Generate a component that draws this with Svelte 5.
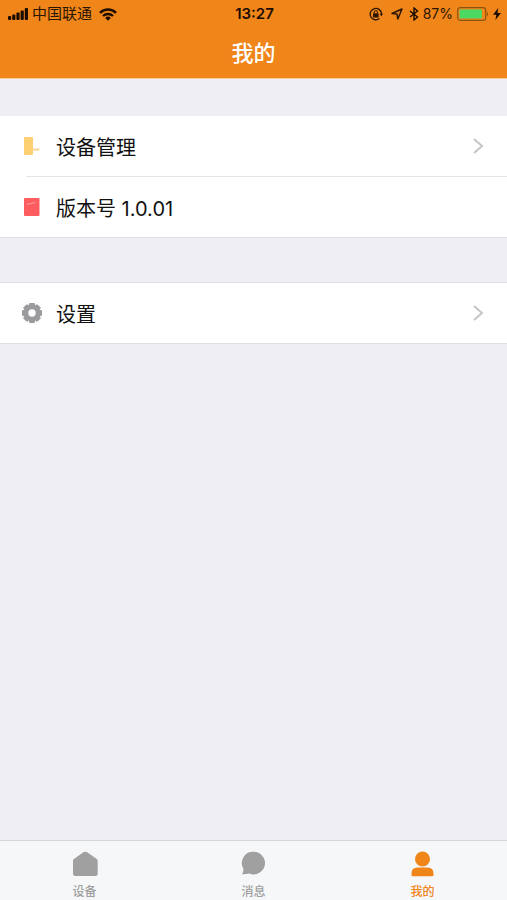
<script lang="ts">
  type Icon = 'door' | 'book' | 'gear'

  interface Row {
    icon: Icon
    label: string
    link: boolean
  }

  const groups: Row[][] = [
    [
      { icon: 'door', label: '设备管理', link: true },
      { icon: 'book', label: '版本号 1.0.01', link: false },
    ],
    [{ icon: 'gear', label: '设置', link: true }],
  ]

  const tabs = [
    { id: 'device', label: '设备' },
    { id: 'message', label: '消息' },
    { id: 'mine', label: '我的' },
  ]

  const teeth = [0, 45, 90, 135, 180, 225, 270, 315]

  let active = $state('mine')
</script>

{#snippet rowIcon(icon: Icon)}
  <svg width="20" height="20" viewBox="0 0 20 20" aria-hidden="true">
    {#if icon === 'door'}
      <rect x="2" y="1" width="9" height="18" rx="1" fill="#fed071" />
      <path d="M9 13.5h8.5" stroke="#fbd58c" stroke-width="2" />
    {:else if icon === 'book'}
      <rect x="2" y="1" width="15.5" height="18" rx="1" fill="#fd5d5f" />
      <path d="M5 7.2q5-.4 8-2" fill="none" stroke="#ff9a98" stroke-width="1.2" />
    {:else}
      <g fill="#9b9b9d">
        {#each teeth as angle}
          <rect x="7" y="0" width="6" height="5" rx="1.2" transform="rotate({angle} 10 10)" />
        {/each}
      </g>
      <circle cx="10" cy="10" r="6" fill="none" stroke="#9b9b9d" stroke-width="4.6" />
    {/if}
  </svg>
{/snippet}

{#snippet rowContent(row: Row)}
  {@render rowIcon(row.icon)}
  <span class="row-label">{row.label}</span>
  {#if row.link}
    <svg width="12" height="18" viewBox="0 0 12 18" aria-hidden="true">
      <path d="M2 2l8 7-8 7" fill="none" stroke="#c5c5c9" stroke-width="2" />
    </svg>
  {/if}
{/snippet}

<div class="app">
  <header>
    <div class="status-bar">
      <div class="status-left">
        <svg width="21" height="12" viewBox="0 0 21 12" fill="#1c0d00" aria-hidden="true">
          <rect x="0" y="8" width="3.2" height="4" rx="1" />
          <rect x="4.2" y="6.5" width="3.2" height="5.5" rx="1" />
          <rect x="8.4" y="4.5" width="3.2" height="7.5" rx="1" />
          <rect x="12.6" y="2.5" width="3.2" height="9.5" rx="1" />
          <rect x="16.8" y="0" width="3.2" height="12" rx="1" />
        </svg>
        <span class="carrier">中国联通</span>
        <svg width="18" height="13" viewBox="0 0 18 13" aria-hidden="true">
          <g fill="none" stroke="#1c0d00" stroke-width="2.4">
            <path d="M1 4.8a11.5 11.5 0 0 1 16 0" />
            <path d="M4 8a7.2 7.2 0 0 1 10 0" />
          </g>
          <path d="M9 12.8l-2.8-2.9a4 4 0 0 1 5.6 0z" fill="#1c0d00" />
        </svg>
      </div>
      <span class="time">13:27</span>
      <div class="status-right">
        <svg width="14" height="14" viewBox="0 0 14 14" aria-hidden="true">
          <path d="M10.5 11.6A5.7 5.7 0 1 1 12.6 7" fill="none" stroke="#2b1602" stroke-width="1.3" />
          <path d="M10.6 6.8h3.4l-1.6 2.5z" fill="#2b1602" />
          <rect x="4" y="6.2" width="5.6" height="4.2" rx=".5" fill="#2b1602" />
          <path d="M5.2 6.5V5.2a1.6 1.6 0 0 1 3.2 0v1.3" fill="none" stroke="#2b1602" />
        </svg>
        <svg class="location" width="12" height="12" viewBox="0 0 12 12" aria-hidden="true">
          <path d="M1 5.5L11 1 6.8 11 6 6z" fill="none" stroke="#2b1602" stroke-width="1.5" stroke-linejoin="round" />
        </svg>
        <svg width="10" height="14" viewBox="0 0 10 14" aria-hidden="true">
          <path d="M1 4l7.5 6L5 13V1l3.5 3L1 10" fill="none" stroke="#1c0d00" stroke-width="1.4" />
        </svg>
        <span class="percent">87%</span>
        <svg width="32" height="14" viewBox="0 0 32 14" aria-hidden="true">
          <rect x=".7" y=".7" width="28" height="12.6" rx="2.5" fill="none" stroke="#8d5310" stroke-width="1.2" />
          <rect x="2.5" y="2.5" width="22.5" height="9" rx="1" fill="#4bd964" />
          <path d="M30 4.5q2 2.5 0 5z" fill="#8d5310" />
        </svg>
        <svg width="8" height="12" viewBox="0 0 8 12" aria-hidden="true">
          <path d="M5.2 0L0 6.8h3.3L2.4 12 8 5H4.5z" fill="#1c0d00" />
        </svg>
      </div>
    </div>
    <h1>我的</h1>
  </header>

  <main>
    {#each groups as group}
      <ul class="group">
        {#each group as row}
          <li>
            {#if row.link}
              <button class="row" type="button">{@render rowContent(row)}</button>
            {:else}
              <div class="row">{@render rowContent(row)}</div>
            {/if}
          </li>
        {/each}
      </ul>
    {/each}
  </main>

  <nav>
    {#each tabs as tab}
      <button class="tab" class:active={active === tab.id} type="button" onclick={() => (active = tab.id)}>
        <svg width="28" height="26" viewBox="0 0 28 26" fill="currentColor" aria-hidden="true">
          {#if tab.id === 'device'}
            <path d="M12.8 1.1a3 3 0 0 1 3 0l10 7a2 2 0 0 1 .9 1.7v13a2.2 2.2 0 0 1-2.2 2.2H4.2A2.2 2.2 0 0 1 2 22.8v-13a2 2 0 0 1 .9-1.7z" />
          {:else if tab.id === 'message'}
            <path d="M13.6.8a11.3 11.3 0 1 1-4.3 21.7q-3.8 1-7.3.8 1.6-2.5 1.4-5.5A11.3 11.3 0 0 1 13.6.8z" />
          {:else}
            <circle cx="13.5" cy="8" r="7.5" />
            <path d="M2.5 24a1.3 1.3 0 0 0 1.3 1.3h19.4a1.3 1.3 0 0 0 1.3-1.3v-1.5q0-6-6-6h-10q-6 0-6 6z" />
          {/if}
        </svg>
        <span>{tab.label}</span>
      </button>
    {/each}
  </nav>
</div>

<style>
  :global(body) {
    margin: 0;
  }

  .app {
    display: flex;
    flex-direction: column;
    min-height: 100vh;
    background: #eeeef3;
    color: #111;
    font-family: Inter, 'Noto Sans CJK SC', sans-serif;
  }

  header {
    background: #f08519;
    border-bottom: 1px solid #f8cfa2;
  }

  .status-bar {
    display: grid;
    grid-template-columns: 1fr auto 1fr;
    align-items: center;
    height: 28px;
    padding: 0 6px 0 8px;
    color: #2b1602;
    font-size: 15px;
    line-height: 28px;
  }

  .status-left,
  .status-right {
    display: flex;
    align-items: center;
  }

  .status-right {
    justify-content: flex-end;
    gap: 4px;
  }

  .carrier {
    margin: 0 7px 0 3px;
  }

  .time {
    font-weight: 600;
    color: #1c0d00;
  }

  .location {
    margin: 0 2px 0 4px;
  }

  .percent {
    font-size: 14px;
  }

  h1 {
    margin: 0;
    color: #fff;
    font-size: 22px;
    font-weight: 500;
    line-height: 50px;
    text-align: center;
  }

  main {
    flex: 1;
    padding-top: 37px;
  }

  .group {
    margin: 0 0 44px;
    padding: 0;
    list-style: none;
    background: #fff;
    border-bottom: 1px solid #dfdfe3;
  }

  .group + .group {
    border-top: 1px solid #dfdfe3;
  }

  li + li::before {
    content: '';
    display: block;
    height: 1px;
    margin-left: 26px;
    background: #e4e4e7;
  }

  .row {
    display: flex;
    align-items: center;
    box-sizing: border-box;
    width: 100%;
    height: 60px;
    padding: 0 23px 0 22px;
    border: 0;
    background: none;
    color: inherit;
    font: inherit;
    font-size: 20px;
    text-align: left;
  }

  button {
    cursor: pointer;
  }

  .row-label {
    flex: 1;
    margin-left: 14px;
  }

  nav {
    display: flex;
    background: #f6f7f9;
    border-top: 1px solid #d5d5da;
  }

  .tab {
    display: flex;
    flex: 1;
    flex-direction: column;
    align-items: center;
    gap: 6px;
    padding: 10px 0 0;
    border: 0;
    background: none;
    color: #a0a0a0;
    font: inherit;
    font-size: 12px;
    font-weight: 500;
    line-height: 17px;
  }

  .tab.active {
    color: #f08519;
  }
</style>
